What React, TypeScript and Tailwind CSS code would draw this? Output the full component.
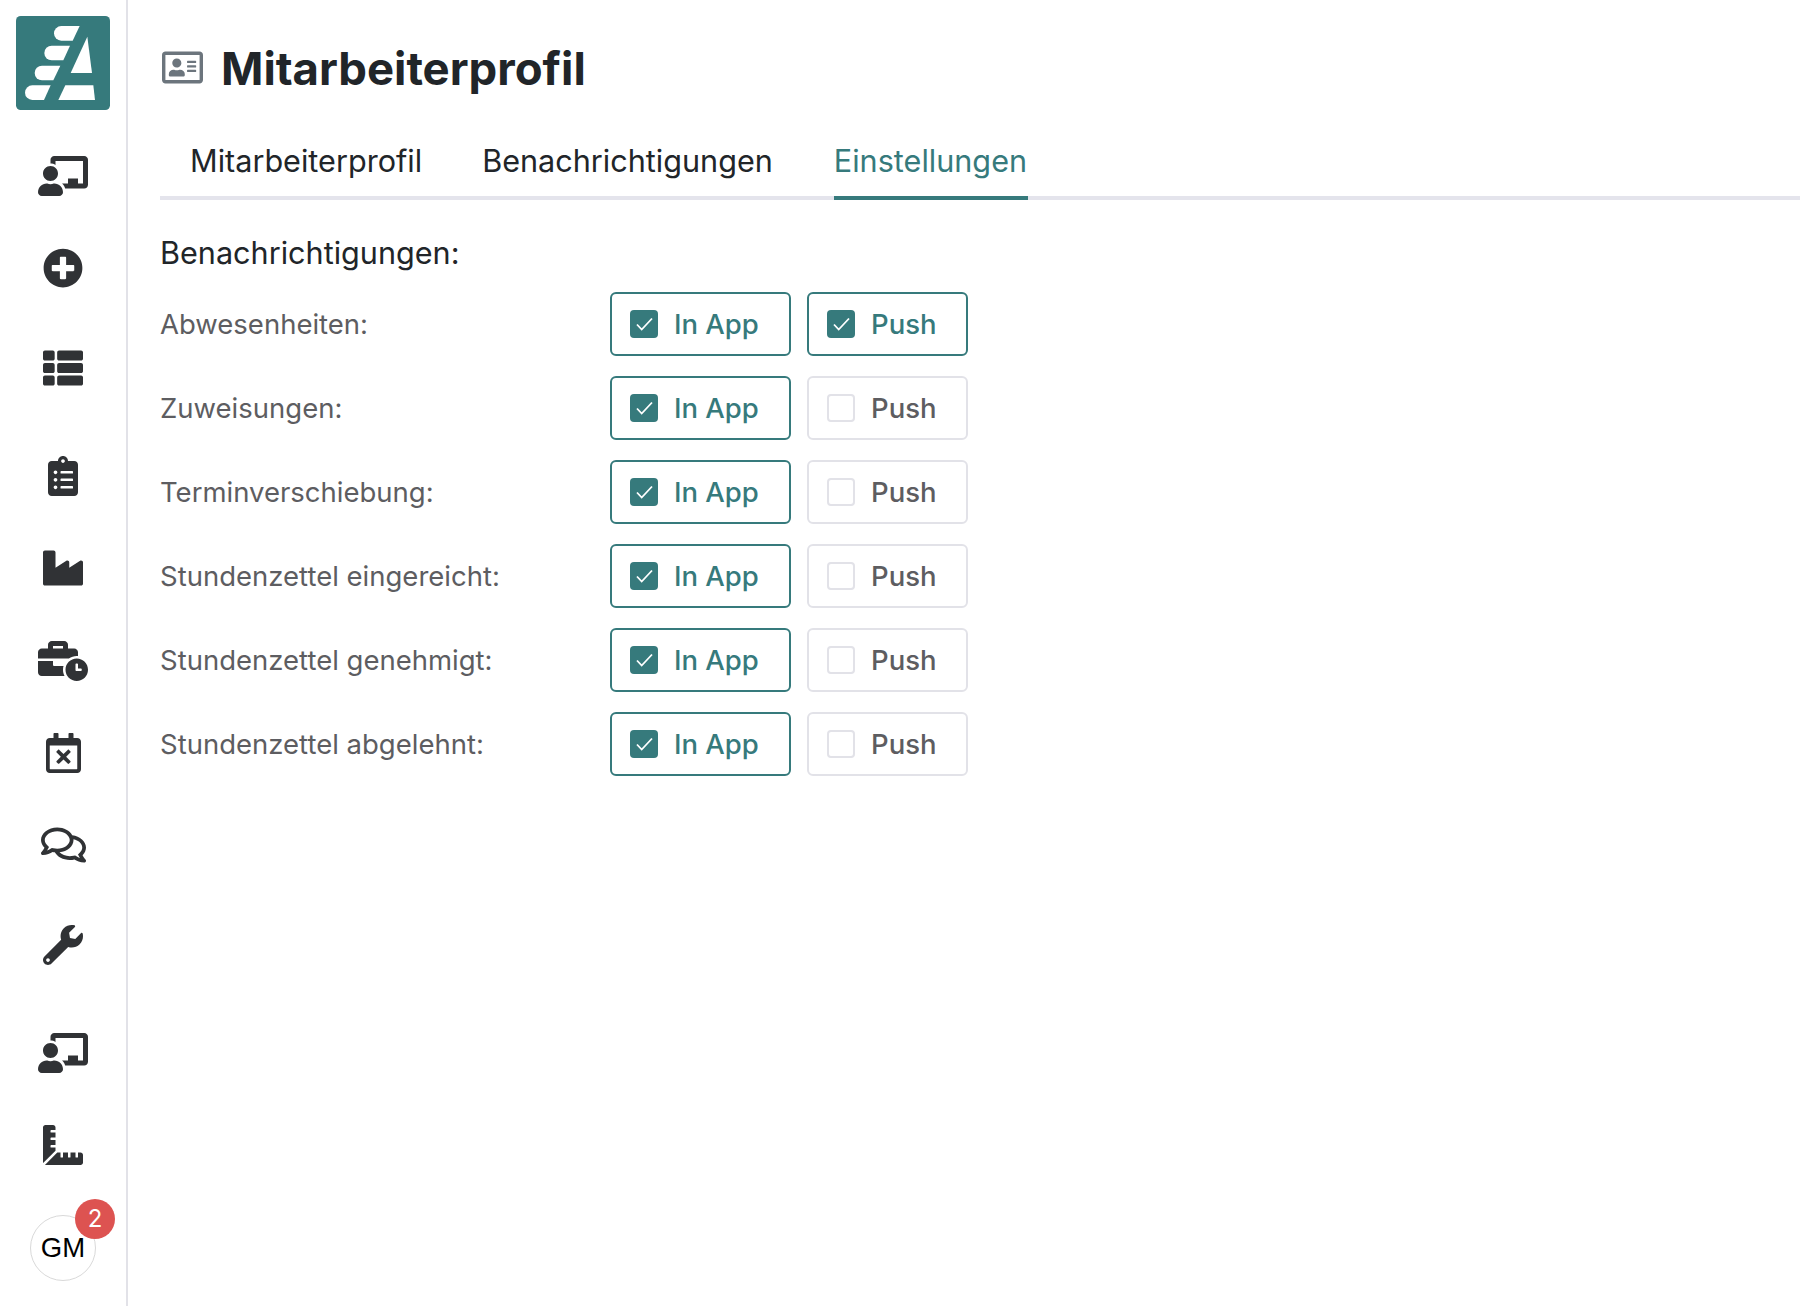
import {
  FaBusinessTime,
  FaChalkboardTeacher,
  FaClipboardList,
  FaIndustry,
  FaPlusCircle,
  FaRegAddressCard,
  FaRegCalendarTimes,
  FaRegComments,
  FaRulerCombined,
  FaThList,
  FaWrench,
} from "react-icons/fa";

const rows = [
  { label: "Abwesenheiten:", push: true },
  { label: "Zuweisungen:", push: false },
  { label: "Terminverschiebung:", push: false },
  { label: "Stundenzettel eingereicht:", push: false },
  { label: "Stundenzettel genehmigt:", push: false },
  { label: "Stundenzettel abgelehnt:", push: false },
];

function Logo() {
  return (
    <svg viewBox="48 48 282 282" className="ml-4 mt-4 block h-[94px] w-[94px]">
      <rect x="48" y="48" width="282" height="282" rx="14" fill="#367a7c" />
      <g fill="#fff">
        <path d="M184 78H239L218 122H184A22 22 0 0 1 184 78Z" />
        <path d="M155 137H210L190 181H155A22 22 0 0 1 155 137Z" />
        <path d="M126 197H181L160 241H126A22 22 0 0 1 126 197Z" />
        <path d="M97 256H152L132 300H97A22 22 0 0 1 97 256Z" />
        <path d="M262 110L276 219H212Z" />
        <path d="M196 256H280L285 300H175Z" />
      </g>
    </svg>
  );
}

function Sidebar() {
  return (
    <aside className="flex h-[1306px] w-[128px] shrink-0 flex-col border-r-2 border-[#e2e2e8] bg-white text-[#303235]">
      <Logo />
      <div className="flex flex-col items-center">
        <FaChalkboardTeacher className="mt-[46px] h-10 w-[50px]" />
        <FaPlusCircle className="mt-[52px] h-10 w-10" />
        <FaThList className="mt-[60px] h-10 w-10" />
        <FaClipboardList className="mt-[68px] h-10 w-[30px]" />
        <FaIndustry className="mt-[52px] h-10 w-10" />
        <FaBusinessTime className="mt-[53px] h-10 w-[50px]" />
        <FaRegCalendarTimes className="mt-[52px] h-10 w-[35px]" />
        <FaRegComments className="mt-[52px] h-10 w-[45px]" />
        <FaWrench className="mt-[60px] h-10 w-10" />
        <FaChalkboardTeacher className="mt-[68px] h-10 w-[50px]" />
        <FaRulerCombined className="mt-[52px] h-10 w-10" />
        <div className="relative mt-[50px] flex h-[66px] w-[66px] items-center justify-center rounded-full border border-[#d9d9d9] bg-white font-['Liberation_Sans',sans-serif] text-[27.5px] text-black">
          GM
          <span className="absolute -top-[17px] left-[44px] flex h-10 w-10 items-center justify-center rounded-full bg-[#dd5351] font-['Inter',sans-serif] text-[24px] text-white">
            2
          </span>
        </div>
      </div>
    </aside>
  );
}

function Toggle({ label, checked, width }: { label: string; checked: boolean; width: string }) {
  return (
    <div
      className={`flex h-16 items-center rounded-[6px] border-2 pl-[18px] ${width} ${
        checked ? "border-[#367a7c] text-[#367a7c]" : "border-[#e2e2e8] text-[#5d5d61]"
      }`}
    >
      <span
        className={`flex h-7 w-7 items-center justify-center rounded-[4px] ${
          checked ? "bg-[#367a7c]" : "border-2 border-[#e2e2e8] bg-white"
        }`}
      >
        {checked && (
          <svg viewBox="0 0 28 28" className="h-7 w-7" fill="none" stroke="#fff" strokeWidth="1.8">
            <path d="M7 14.5L11.7 19.5L22 8.5" />
          </svg>
        )}
      </span>
      <span className="ml-4 pt-[2px] text-[27.5px] font-[450] leading-none">{label}</span>
    </div>
  );
}

export default function App() {
  return (
    <div className="flex min-h-screen bg-white font-['Inter',sans-serif] text-[#212529]">
      <Sidebar />
      <main className="min-w-0 flex-1 pl-8">
        <div className="flex h-[94px] items-end">
          <FaRegAddressCard className="mb-[8px] ml-[2px] h-[37px] w-[41px] text-[#6c757d]" />
          <h1 className="ml-[18px] text-[45.5px] font-bold leading-[50px]">Mitarbeiterprofil</h1>
        </div>
        <nav className="mt-[40px] flex h-[66px] items-start border-b-4 border-[#e4e4ec] text-[30.6px]">
          <span className="pl-[30px] pr-[30px] pt-[5px] leading-[44px]">Mitarbeiterprofil</span>
          <span className="pl-[30px] pr-[30px] pt-[5px] leading-[44px]">Benachrichtigungen</span>
          <span className="-mb-1 ml-[31px] h-[66px] w-[194px] border-b-4 border-[#367a7c] pt-[5px] leading-[44px] text-[#367a7c]">
            Einstellungen
          </span>
        </nav>
        <h2 className="mt-[33px] text-[30.6px] leading-[40px]">Benachrichtigungen:</h2>
        <div className="mt-[19px] flex flex-col gap-5">
          {rows.map((row) => (
            <div key={row.label} className="flex items-center">
              <span className="w-[450px] pt-[2px] text-[27.5px] text-[#5d5d61]">{row.label}</span>
              <Toggle label="In App" checked width="w-[181px]" />
              <div className="ml-4">
                <Toggle label="Push" checked={row.push} width="w-[161px]" />
              </div>
            </div>
          ))}
        </div>
      </main>
    </div>
  );
}
